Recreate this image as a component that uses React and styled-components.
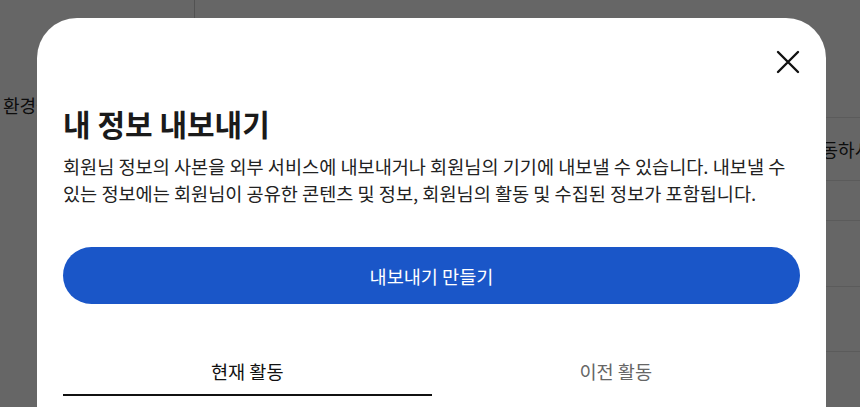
import React, { useState } from 'react'
import styled, { createGlobalStyle } from 'styled-components'

const GlobalStyle = createGlobalStyle`
  html, body, #root { margin: 0; padding: 0; height: 100%; }
  body {
    font-family: "Noto Sans CJK KR", "Noto Sans", sans-serif;
    color: #222;
    background: #fff;
    overflow: hidden;
  }
`

const Page = styled.div`
  display: flex;
  height: 100vh;
`

const Sidebar = styled.aside`
  width: 194px;
  border-right: 1px solid #ccc;
  padding-top: 90px;
`

const NavItem = styled.div`
  font-size: 18px;
  line-height: 30px;
  padding-left: 3px;
  white-space: nowrap;
`

const Main = styled.main`
  flex: 1;
  padding-top: 117px;
  display: flex;
  flex-direction: column;
  overflow: hidden;
`

const Row = styled.div`
  height: ${p => p.$h}px;
  border-top: 1px solid #e4e4e4;
  display: flex;
  align-items: center;
  font-size: 18px;
  white-space: nowrap;
`

const RowText = styled.span`
  margin-left: 610px;
`

const Overlay = styled.div`
  position: fixed;
  inset: 0;
  background: rgba(0, 0, 0, 0.6);
  display: flex;
  justify-content: center;
  padding-top: 18px;
  padding-left: 3px;
`

const Modal = styled.div`
  width: 789px;
  height: 600px;
  background: #fff;
  border-radius: 40px 40px 0 0;
  padding: 0 26px;
  box-sizing: border-box;
`

const Header = styled.div`
  display: flex;
  justify-content: flex-end;
  padding-top: 32px;
`

const CloseButton = styled.button`
  width: 24px;
  height: 24px;
  padding: 0;
  border: 0;
  background: none;
  display: flex;
  align-items: center;
  justify-content: center;
  cursor: pointer;
  color: #111;
`

const Title = styled.h2`
  margin: 29px 0 0;
  font-size: 30px;
  line-height: 40px;
  font-weight: 700;
  color: #1a1a1a;
`

const Description = styled.p`
  margin: 9px 0 0;
  font-size: 18.6px;
  line-height: 27px;
  color: #222;
`

const PrimaryButton = styled.button`
  display: block;
  width: 100%;
  height: 57px;
  margin-top: 41px;
  border: 0;
  border-radius: 29px;
  background: #1a56c8;
  color: #fff;
  font-family: inherit;
  font-size: 18.6px;
  cursor: pointer;
`

const Tabs = styled.div`
  display: grid;
  grid-template-columns: 1fr 1fr;
  margin-top: 43px;
`

const Tab = styled.button`
  height: 49px;
  border: 0;
  background: none;
  padding: 0;
  font-family: inherit;
  font-size: 18.6px;
  color: ${p => (p.$active ? '#111' : '#666')};
  border-bottom: 2px solid ${p => (p.$active ? '#111' : 'transparent')};
  cursor: pointer;
`

function CloseIcon() {
  return (
    <svg width="24" height="24" viewBox="0 0 24 24" fill="none">
      <path d="M2 2L22 22M22 2L2 22" stroke="currentColor" strokeWidth="2.4" strokeLinecap="round" />
    </svg>
  )
}

export default function App() {
  const [tab, setTab] = useState(0)
  const tabs = ['현재 활동', '이전 활동']
  return (
    <>
      <GlobalStyle />
      <Page>
        <Sidebar>
          <NavItem>환경설정</NavItem>
        </Sidebar>
        <Main>
          <Row $h={67}><RowText>활동하시</RowText></Row>
          <Row $h={43} />
          <Row $h={70} />
          <Row $h={69} />
          <Row $h={60} />
        </Main>
      </Page>
      <Overlay>
        <Modal>
          <Header>
            <CloseButton aria-label="닫기"><CloseIcon /></CloseButton>
          </Header>
          <Title>내 정보 내보내기</Title>
          <Description>
            회원님 정보의 사본을 외부 서비스에 내보내거나 회원님의 기기에 내보낼 수 있습니다. 내보낼 수 있는 정보에는 회원님이 공유한 콘텐츠 및 정보, 회원님의 활동 및 수집된 정보가 포함됩니다.
          </Description>
          <PrimaryButton>내보내기 만들기</PrimaryButton>
          <Tabs>
            {tabs.map((t, i) => (
              <Tab key={t} $active={tab === i} onClick={() => setTab(i)}>{t}</Tab>
            ))}
          </Tabs>
        </Modal>
      </Overlay>
    </>
  )
}
